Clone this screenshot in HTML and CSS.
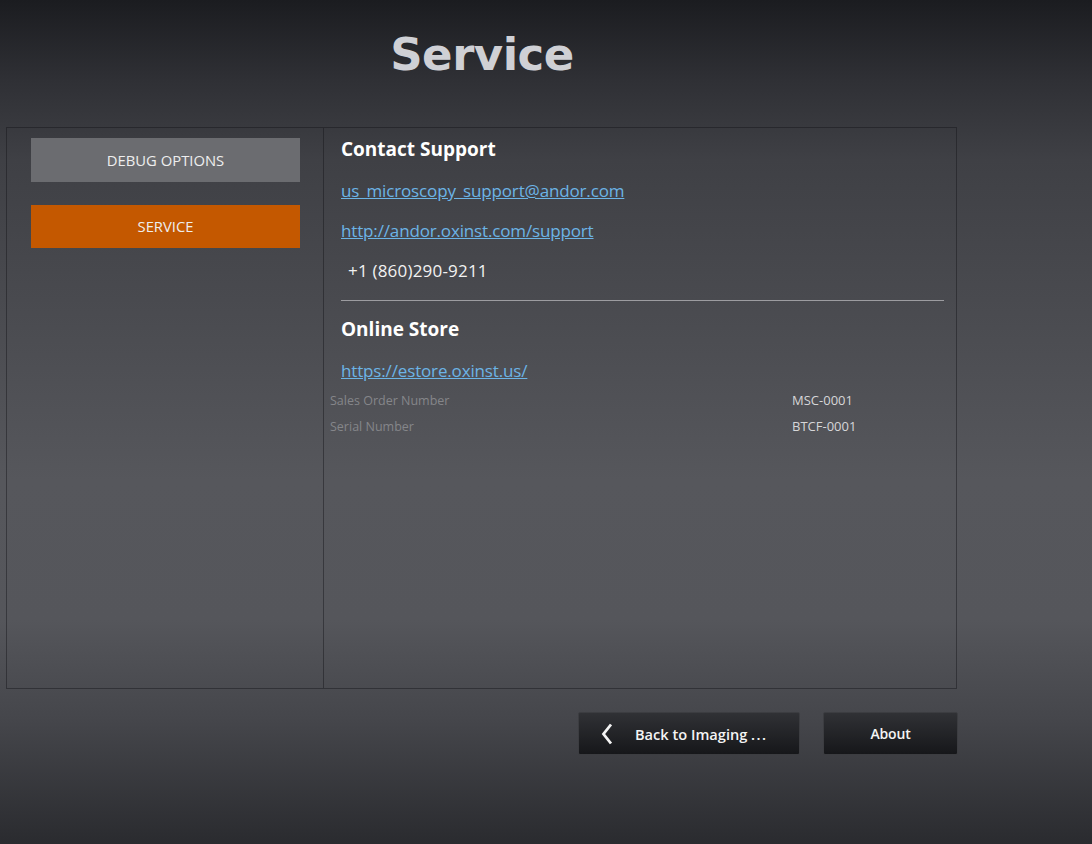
FILE: index.html
```html
<!DOCTYPE html>
<html lang="en">

<head>
    <meta charset="UTF-8" />
    <title>Service</title>
    <link rel="stylesheet" href="styles.css">
</head>

<body>
    <div class="page">
        <!-- 标题 -->
        <div class="title">Service</div>

        <div class="panel">
            <!-- 左侧菜单 -->
            <div class="menu">
                <div class="menu-btn">DEBUG OPTIONS</div>
                <div class="menu-btn active">SERVICE</div>
            </div>

            <!-- 右侧内容 -->
            <div class="content">
                <div class="block">
                    <div class="head">Contact Support</div>
                    <div class="row first"><a href="#">us_microscopy_support@andor.com</a></div>
                    <div class="row"><a href="#">http://andor.oxinst.com/support</a></div>
                    <div class="row phone">+1 (860)290-9211</div>
                </div>
                <div class="line"></div>
                <div class="block store">
                    <div class="head">Online Store</div>
                    <div class="row shop"><a href="#">https://estore.oxinst.us/</a></div>
                </div>
                <div class="info">
                    <span class="label">Sales Order Number</span>
                    <span class="value">MSC-0001</span>
                </div>
                <div class="info">
                    <span class="label">Serial Number</span>
                    <span class="value">BTCF-0001</span>
                </div>
            </div>
        </div>

        <!-- 底部按钮 -->
        <div class="footer">
            <div class="btn back">
                <svg width="12" height="22" viewBox="0 0 12 22">
                    <polyline points="10,1.5 2.5,11 10,20.5" fill="none" stroke="#f4f4f4" stroke-width="2.8" />
                </svg>
                <span>Back to Imaging <span class="dots">...</span></span>
            </div>
            <div class="btn about">About</div>
        </div>
    </div>
</body>

</html>
```

FILE: styles.css
```css
* {
    margin: 0;
    padding: 0;
    box-sizing: border-box;
}

body {
    width: 1092px;
    height: 844px;
    overflow: hidden;
    font-family: "Open Sans", "Noto Sans", sans-serif;
    background: linear-gradient(to bottom, #1b1c20 0px, #2f3035 80px, #3f4045 160px, #56575c 480px, #55565b 620px, #45464b 720px, #2a2b2f 844px);
}

.page {
    width: 958px;
}

.title {
    height: 127px;
    padding-top: 28px;
    padding-left: 6px;
    text-align: center;
    font: bold 45px "DejaVu Sans", Verdana, sans-serif;
    color: #cfd0d5;
    letter-spacing: -0.5px;
}

.panel {
    margin-left: 6px;
    width: 951px;
    height: 562px;
    display: flex;
    border: 1px solid rgba(20, 20, 24, 0.45);
}

.menu {
    width: 317px;
    padding: 10px 0 0 24px;
    border-right: 1px solid rgba(20, 20, 24, 0.45);
}

.menu-btn {
    width: 269px;
    height: 44px;
    line-height: 44px;
    margin-bottom: 23px;
    text-align: center;
    font-size: 14.8px;
    color: #eeeeee;
    background: #6b6c70;
}

.menu-btn.active {
    height: 43px;
    line-height: 43px;
    background: #c45800;
}

.content {
    flex: 1;
    padding: 1px 12px 0 6px;
}

.block {
    padding-left: 11px;
}

.head {
    height: 40px;
    line-height: 40px;
    font-size: 19px;
    font-weight: bold;
    color: #ffffff;
}

.row {
    height: 40px;
    line-height: 40px;
    font-size: 17px;
}

.row.first {
    margin-top: 2px;
}

.row a {
    color: #6cb4e6;
    text-decoration: underline;
    letter-spacing: -0.15px;
}

.phone {
    padding-left: 7px;
    color: #f2f2f2;
    letter-spacing: 0.2px;
}

.line {
    height: 1px;
    margin: 9px 0 0 11px;
    background: #9c9ca0;
}

.store {
    margin-top: 8px;
}

.row.shop {
    height: 32px;
    line-height: 32px;
    margin-top: 6px;
}

.info {
    display: flex;
    height: 26px;
    line-height: 27px;
    font-size: 12.5px;
}

.info .label {
    width: 462px;
    color: #85868a;
}

.info .value {
    font-size: 13px;
    color: #d6d6d8;
}

.footer {
    display: flex;
    justify-content: flex-end;
    gap: 23px;
    margin-top: 23px;
}

.btn {
    height: 43px;
    display: flex;
    align-items: center;
    border: 1px solid #3c3d41;
    border-radius: 2px;
    background: linear-gradient(to bottom, #303135, #16171a);
    color: #f4f4f4;
    font-size: 14px;
    font-weight: 600;
    letter-spacing: -0.2px;
}

.back {
    width: 222px;
    padding-left: 22px;
}

.back span {
    margin-left: 22px;
    font-size: 14.6px;
    letter-spacing: 0;
}

.back .dots {
    margin-left: 0;
    letter-spacing: 1.5px;
}

.about {
    width: 135px;
    justify-content: center;
}
```
